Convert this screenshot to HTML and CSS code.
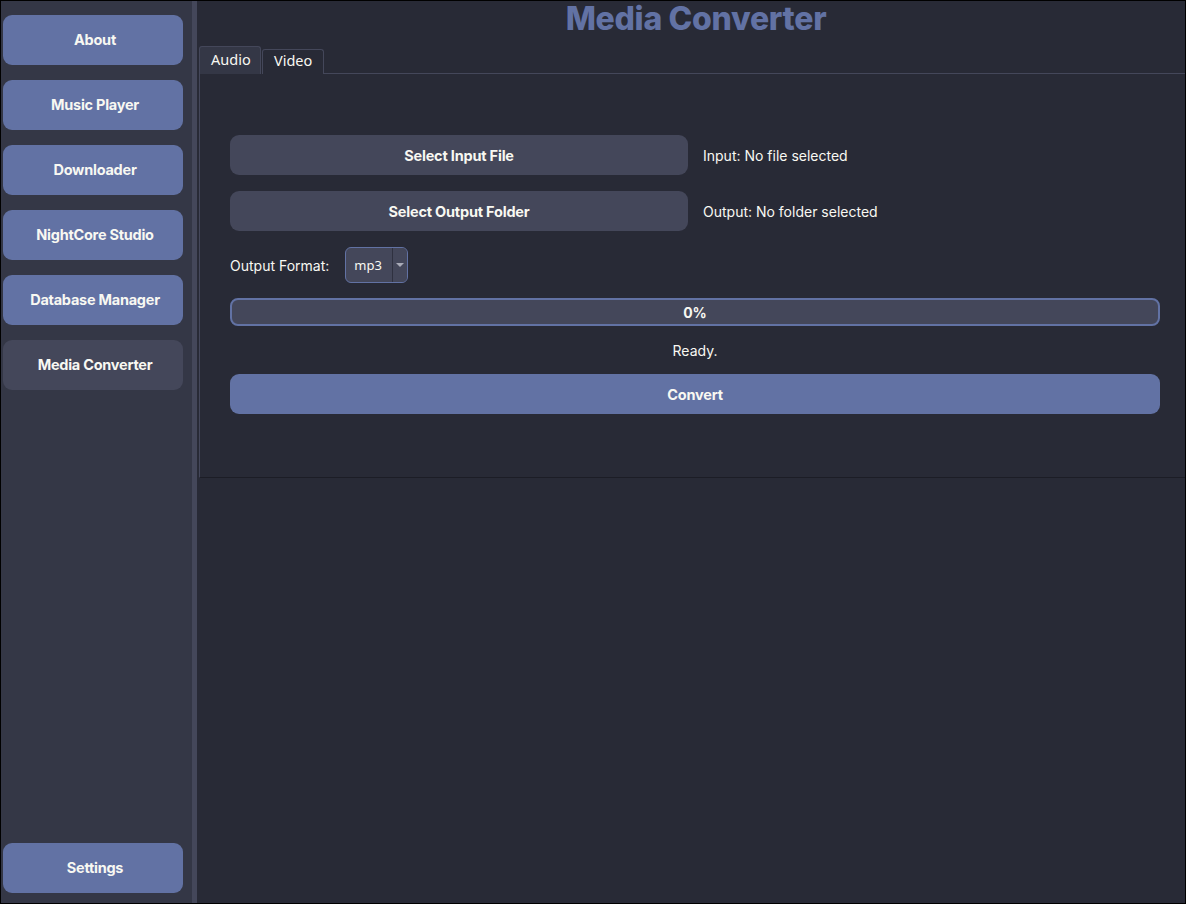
FILE: index.html
```html
<!DOCTYPE html>
<html>
<head>
<meta charset="utf-8">
<link rel="stylesheet" href="styles.css">
</head>
<body>
<div class="window">
  <nav class="sidebar">
    <button class="nav-btn">About</button>
    <button class="nav-btn">Music Player</button>
    <button class="nav-btn">Downloader</button>
    <button class="nav-btn">NightCore Studio</button>
    <button class="nav-btn">Database Manager</button>
    <button class="nav-btn active">Media Converter</button>
    <button class="nav-btn settings">Settings</button>
  </nav>
  <div class="divider"></div>
  <main class="main">
    <h1 class="title">Media Converter</h1>
    <div class="tabs">
      <div class="tab selected">Audio</div>
      <div class="tab">Video</div>
      <div class="tab-fill"></div>
    </div>
    <section class="pane">
      <div class="grid">
        <button class="btn">Select Input File</button>
        <span class="info">Input: No file selected</span>
        <button class="btn">Select Output Folder</button>
        <span class="info">Output: No folder selected</span>
      </div>
      <div class="format-row">
        <span class="label">Output Format:</span>
        <div class="combo">
          <span class="combo-value">mp3</span>
          <span class="combo-arrow"><svg width="8" height="5" viewBox="0 0 8 5"><path d="M0 0H8L4 4Z" fill="#a9abb8"/></svg></span>
        </div>
      </div>
      <div class="progress"><span>0%</span></div>
      <div class="status">Ready.</div>
      <button class="btn primary">Convert</button>
    </section>
  </main>
</div>
</body>
</html>
```
FILE: styles.css
```css
* { box-sizing: border-box; }
html, body { margin: 0; padding: 0; background: #000; }
body { font-family: Inter, "Noto Sans", sans-serif; color: #f8f8f2; }

.window {
  width: 1186px;
  height: 904px;
  border: 1px solid #000;
  display: flex;
  background: #282a36;
  overflow: hidden;
}

.sidebar {
  width: 191px;
  background: #343746;
  display: flex;
  flex-direction: column;
  gap: 15px;
  padding: 14px 0 10px 2px;
}

.nav-btn {
  width: 180px;
  height: 50px;
  flex: none;
  border: none;
  border-radius: 9px;
  background: #6272a4;
  color: #f8f8f2;
  font-family: Inter, "Noto Sans", sans-serif;
  font-weight: 700;
  font-size: 14.5px;
  letter-spacing: -0.25px;
  padding: 0 0 2px 4px;
}
.nav-btn.active { background: #44475a; }
.nav-btn.settings { margin-top: auto; }

.divider {
  width: 5px;
  background: #44475a;
  flex: none;
}

.main {
  flex: 1;
  display: flex;
  flex-direction: column;
  padding-left: 2px;
}

.title {
  margin: 0;
  height: 45px;
  text-align: center;
  padding-left: 8px;
  font-size: 32px;
  line-height: 36px;
  font-weight: 800;
  letter-spacing: -0.3px;
  color: #6272a4;
}

.tabs {
  display: flex;
  align-items: flex-end;
  height: 28px;
}
.tab {
  height: 25px;
  padding: 0 11px;
  border: 1px solid #44475a;
  border-bottom: none;
  border-radius: 3px 3px 0 0;
  background: #282a36;
  color: #f8f8f2;
  font-family: "Noto Sans", sans-serif;
  font-size: 14.5px;
  line-height: 21px;
  margin-left: 1px;
}
.tab.selected {
  height: 28px;
  margin-left: 0;
  width: 62px;
  padding: 0 11px;
  background: #343746;
  line-height: 25px;
}
.tab-fill {
  flex: 1;
  border-bottom: 1px solid #44475a;
}

.pane {
  height: 404px;
  border-left: 1px solid #44475a;
  border-bottom: 1px solid #1c1d26;
  padding: 61px 25px 0 30px;
  display: flex;
  flex-direction: column;
}

.grid {
  display: grid;
  grid-template-columns: 458px 1fr;
  column-gap: 15px;
  row-gap: 16px;
  align-items: center;
}

.btn {
  height: 40px;
  border: none;
  border-radius: 9px;
  background: #44475a;
  color: #f8f8f2;
  font-family: Inter, "Noto Sans", sans-serif;
  font-weight: 700;
  font-size: 14.5px;
  letter-spacing: -0.2px;
  padding: 0;
}
.btn.primary { background: #6272a4; width: 100%; }

.info, .label, .status {
  font-size: 14px;
  color: #f8f8f2;
}

.format-row {
  display: flex;
  align-items: center;
  gap: 16px;
  margin-top: 16px;
  height: 36px;
}
.combo {
  width: 63px;
  height: 36px;
  border: 1px solid #6272a4;
  border-radius: 6px;
  background: #44475a;
  display: flex;
  overflow: hidden;
}
.combo-value {
  flex: 1;
  font-family: "Noto Sans", sans-serif;
  font-size: 13px;
  line-height: 34px;
  padding-left: 8px;
}
.combo-arrow {
  width: 15px;
  border-left: 1px solid #2f3140;
  display: flex;
  align-items: center;
  justify-content: center;
  background: #44475a;
}

.progress {
  margin-top: 15px;
  height: 28px;
  border: 2px solid #6272a4;
  border-radius: 8px;
  background: #44475a;
  display: flex;
  align-items: center;
  justify-content: center;
  font-weight: 700;
  font-size: 14px;
}

.status {
  margin-top: 15px;
  text-align: center;
  line-height: 20px;
  height: 20px;
}

.btn.primary { margin-top: 13px; }
```
